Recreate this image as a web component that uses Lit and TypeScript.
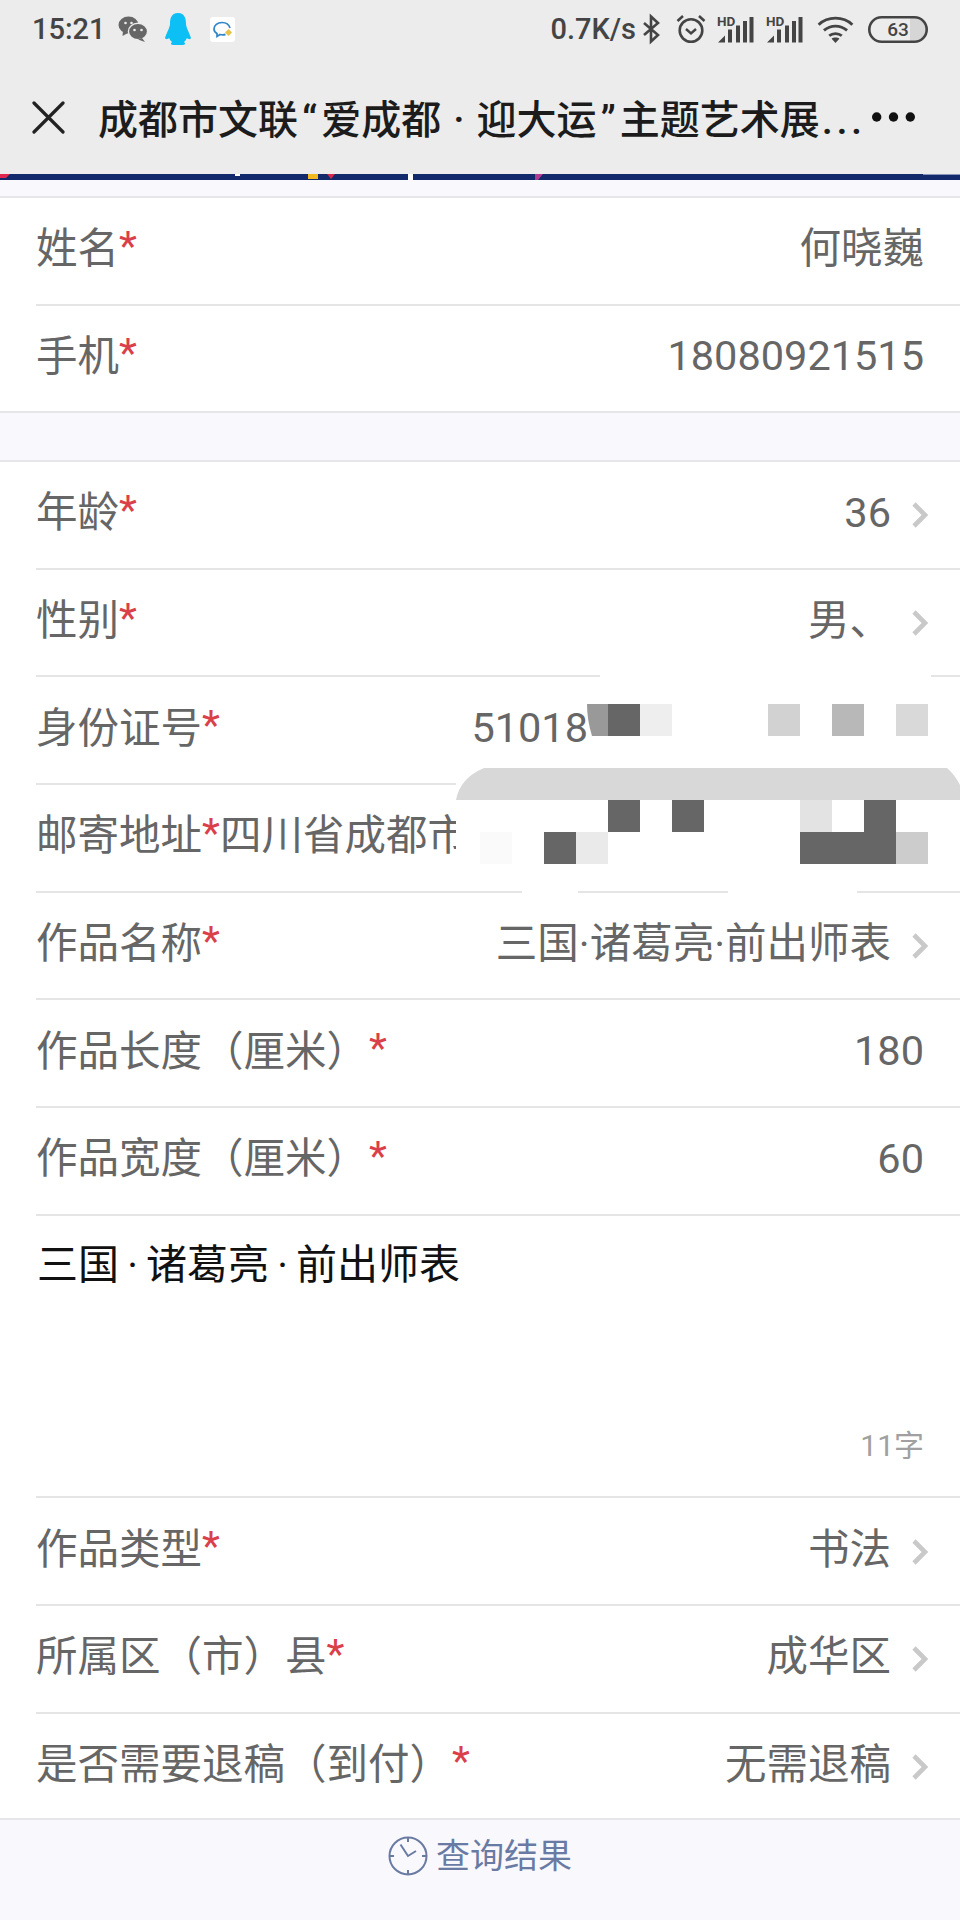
import { LitElement, html, css, svg } from "lit";
import { customElement } from "lit/decorators.js";

interface Field { label: string; value: string; chevron?: boolean; spaced?: boolean; kind?: string }

const FIRST: Field[] = [
  { label: "姓名", value: "何晓巍" },
  { label: "手机", value: "18080921515", kind: "num" },
];
const SECOND: Field[] = [
  { label: "年龄", value: "36", chevron: true, kind: "num" },
  { label: "性别", value: "男、", chevron: true },
  { label: "身份证号", value: "51018", kind: "id num" },
  { label: "邮寄地址", value: "四川省成都市", kind: "left" },
  { label: "作品名称", value: "三国·诸葛亮·前出师表", chevron: true },
  { label: "作品长度（厘米）", value: "180", spaced: true, kind: "num" },
  { label: "作品宽度（厘米）", value: "60", spaced: true, kind: "num" },
];
const THIRD: Field[] = [
  { label: "作品类型", value: "书法", chevron: true },
  { label: "所属区（市）县", value: "成华区", chevron: true },
  { label: "是否需要退稿（到付）", value: "无需退稿", chevron: true, spaced: true },
];

// Mosaic cells on a 32px grid: x, y, w, h, colour
const MOSAIC: [number, number, number, number, string][] = [
  [608, 704, 32, 32, "#666666"],
  [640, 704, 32, 32, "#eeeeee"],
  [768, 704, 32, 32, "#d2d2d2"],
  [832, 704, 32, 32, "#b8b8b8"],
  [896, 704, 32, 32, "#d9d9da"],
  [608, 800, 32, 32, "#666666"],
  [672, 800, 32, 32, "#666666"],
  [800, 800, 32, 32, "#e3e3e3"],
  [864, 800, 32, 32, "#666666"],
  [480, 832, 32, 32, "#fafafa"],
  [544, 832, 32, 32, "#666666"],
  [576, 832, 32, 32, "#eaeaea"],
  [800, 832, 96, 32, "#666666"],
  [896, 832, 32, 32, "#cccccc"],
];
// White patches of the redaction that hide text and rules below it
const PATCHES: [number, number, number, number][] = [
  [600, 670, 331, 34],
  [587, 704, 373, 64],
  [456, 768, 504, 118],
  [522, 880, 56, 16],
  [728, 880, 129, 16],
];

@customElement("app-root")
export class AppRoot extends LitElement {
  static styles = css`
    :host {
      display: block;
      position: relative;
      width: 960px;
      height: 1920px;
      overflow: hidden;
      background: #fff;
      font-family: Roboto, "Noto Sans CJK SC", sans-serif;
    }
    .top { background: #ececec; height: 174px; display: flex; flex-direction: column; }
    .status {
      height: 58px;
      padding: 0 32px;
      display: flex;
      align-items: center;
      color: #444;
    }
    .status .time { font-size: 29px; font-weight: 500; width: 70px; white-space: nowrap; }
    .status .speed { font-size: 29px; margin-left: auto; font-weight: 500; white-space: nowrap; }
    .status svg { display: block; flex: none; overflow: visible; }
    .ml6 { margin-left: 6px; }
    .ml11 { margin-left: 11px; }
    .ml12 { margin-left: 12px; }
    .ml14 { margin-left: 14px; }
    .ml15 { margin-left: 15px; }
    .ml16 { margin-left: 16px; }
    .ml18 { margin-left: 18px; }
    .title-row { flex: 1; display: flex; align-items: center; padding: 2px 0 0 32px; }
    .close { flex: none; display: block; }
    .title {
      font-size: 40px;
      font-weight: 500;
      color: #1c1c1c;
      margin-left: 33px;
      white-space: nowrap;
      flex: 1;
      min-width: 0;
      word-spacing: 2px;
    }
    .title .q { padding: 0 4px; }
    .title .dots { letter-spacing: 3.5px; margin-left: 2px; }
    .more { margin-right: 45px; flex: none; display: block; }
    .banner { height: 6px; display: block; width: 960px; }
    .spacer { background: #f9f8fd; height: 16px; border-bottom: 2px solid #e6e6e8; }
    .gap { background: #f9f8fd; height: 47.3px; border-top: 2px solid #e6e6e8; border-bottom: 2px solid #e6e6e8; }
    .row {
      margin-left: 36px;
      height: 107.7px;
      box-sizing: border-box;
      border-bottom: 2px solid #e5e5e5;
      padding: 0 36px 11px 0;
      display: flex;
      align-items: center;
      font-size: 41.5px;
      color: #666;
      white-space: nowrap;
    }
    .row.last { border-bottom: none; height: 105px; }
    .star { color: #d9404a; }
    .star.spaced { margin-left: 1px; }
    .value { margin-left: auto; color: #666; }
    .value.num { margin-top: 6px; }
    .value.left { margin-left: 0; }
    .value.id { margin-right: 336px; }
    .chev { margin-left: 20px; margin-right: -5px; margin-top: 12px; display: block; flex: none; }
    .note {
      margin-left: 36px;
      height: 282.5px;
      box-sizing: border-box;
      border-bottom: 2px solid #e5e5e5;
      padding: 21px 36px 0 1px;
      display: flex;
      flex-direction: column;
    }
    .note .text { font-size: 41px; color: #111; line-height: 56px; word-spacing: -2px; }
    .note .count { margin-top: auto; margin-bottom: 32px; align-self: flex-end; font-size: 30px; color: #a0a0a0; line-height: 36px; }
    .foot {
      position: absolute;
      left: 0;
      right: 0;
      bottom: 0;
      height: 102px;
      box-sizing: border-box;
      border-top: 2px solid #e6e6e8;
      background: #f9f8fd;
      display: flex;
      justify-content: center;
      padding-top: 16px;
      color: #6a7ba3;
      font-size: 34px;
      gap: 8px;
    }
    .foot span { line-height: 44px; margin-top: -2px; }
    .foot svg { display: block; }
    .cover { position: absolute; left: 0; top: 0; width: 960px; height: 1920px; display: block; pointer-events: none; }
  `;

  private chev() {
    return html`<svg class="chev" width="18" height="28" viewBox="0 0 18 28"><path d="M3 3 L14 14 L3 25" fill="none" stroke="#c9c9c9" stroke-width="4.6"/></svg>`;
  }

  private field(f: Field, last = false) {
    return html`<div class="row ${last ? "last" : ""}">
      <span>${f.label}</span><span class="star ${f.spaced ? "spaced" : ""}">*</span>
      <span class="value ${f.kind ?? ""}">${f.value}</span>
      ${f.chevron ? this.chev() : ""}
    </div>`;
  }

  private signal(cls: string) {
    return html`<svg class=${cls} width="37" height="27" viewBox="0 0 37 27">
      <text x="0" y="9.5" font-size="13.5" font-weight="700" font-family="Roboto" fill="#444">HD</text>
      <path fill="#444" d="M1 26.5 L8 19.5 V26.5 Z M11 13.5 H15 V26.5 H11 Z M19 9.5 H23 V26.5 H19 Z M26 5 H30 V26.5 H26 Z M32.5 1 H36.5 V26.5 H32.5 Z"/>
    </svg>`;
  }

  render() {
    return html`
      <div class="top">
        <div class="status">
          <span class="time">15:21</span>
          <svg class="ml16" width="30" height="26" viewBox="0 0 30 26">
            <ellipse cx="10.5" cy="9" rx="10" ry="8.5" fill="#666"/>
            <path d="M5 15 L4.5 20 L10 17 Z" fill="#666"/>
            <ellipse cx="20" cy="15.5" rx="9.6" ry="8.2" fill="#666" stroke="#ececec" stroke-width="1.4"/>
            <path d="M24 22 L27 26 L20 23.5 Z" fill="#666"/>
            <circle cx="7.5" cy="7" r="1.3" fill="#ececec"/><circle cx="13.5" cy="7" r="1.3" fill="#ececec"/>
            <circle cx="16.5" cy="14" r="1.3" fill="#ececec"/><circle cx="23.5" cy="14" r="1.3" fill="#ececec"/>
          </svg>
          <svg class="ml16" width="28" height="32" viewBox="0 0 28 32">
            <path fill="#0cc0f5" d="M14 0 C7 0 6 6 6 11 C6 14 3 19 1 25 C2 27 4 26 5 25 C6 27 7 28 8 29 C6 31 7 32 10 32 H18 C21 32 22 31 20 29 C21 28 22 27 23 25 C24 26 26 27 27 25 C25 19 22 14 22 11 C22 6 21 0 14 0 Z"/>
          </svg>
          <svg class="ml18" width="25" height="25" viewBox="0 0 25 25">
            <rect width="25" height="25" rx="3" fill="#fff"/>
            <path d="M12 5.5 C7.5 5.5 4 8.2 4 12 C4 14 5 15.5 7 16.5 L7 19.5 L10 17.5 C12 18 14 18 15.5 17.4" fill="none" stroke="#2e86c8" stroke-width="1.7"/>
            <path d="M12 5.5 C16 5.5 19 7.5 20 11" fill="none" stroke="#2e86c8" stroke-width="1.7"/>
            <path d="M18.5 12 L22 15.5 L18.5 19 L15 15.5 Z" fill="#e8c24a"/>
          </svg>
          <span class="speed">0.7K/s</span>
          <svg class="ml6" width="19" height="28" viewBox="0 0 19 28">
            <path d="M2 8 L16 20 L9 26.5 V1.5 L16 8 L2 20" fill="none" stroke="#444" stroke-width="2.6"/>
          </svg>
          <svg class="ml15" width="30" height="30" viewBox="0 0 30 30">
            <circle cx="15" cy="16.5" r="11.3" fill="none" stroke="#444" stroke-width="2.6"/>
            <path d="M10 15 L15 19.5 L20 15" fill="none" stroke="#444" stroke-width="2.4"/>
            <path d="M1.5 7 L7 2 M28.5 7 L23 2" stroke="#444" stroke-width="2.6"/>
          </svg>
          ${this.signal("ml11")}${this.signal("ml12")}
          <svg class="ml14" width="37" height="27" viewBox="0 0 38 28">
            <path d="M1.5 9 C11 0 27 0 36.5 9 M7 15 C14 9 24 9 31 15 M12.5 20.5 C16 17.5 22 17.5 25.5 20.5" fill="none" stroke="#444" stroke-width="3"/>
            <path d="M19 28 L15 23.5 C17 22 21 22 23 23.5 Z" fill="#444"/>
          </svg>
          <svg class="ml14" width="60" height="27" viewBox="0 0 60 27">
            <path d="M42 2 H46 C52 2 57.5 7 57.5 13.5 C57.5 20 52 25 46 25 H42 Z" fill="#d6d6d6"/>
            <rect x="1.3" y="1.3" width="57.4" height="24.4" rx="12.2" fill="none" stroke="#444" stroke-width="2.6"/>
            <text x="30" y="20" text-anchor="middle" font-size="19" font-weight="500" font-family="Roboto" fill="#444">63</text>
          </svg>
        </div>
        <div class="title-row">
          <svg class="close" width="33" height="33" viewBox="0 0 33 33">
            <path d="M2 2 L31 31 M31 2 L2 31" stroke="#222" stroke-width="3.2" stroke-linecap="round"/>
          </svg>
          <div class="title">成都市文联<span class="q">“</span>爱成都 · 迎大运<span class="q">”</span>主题艺术展<span class="dots">...</span></div>
          <svg class="more" width="43" height="10" viewBox="0 0 43 10">
            <circle cx="4.7" cy="5" r="4.7" fill="#111"/><circle cx="21.5" cy="5" r="4.7" fill="#111"/><circle cx="38.3" cy="5" r="4.7" fill="#111"/>
          </svg>
        </div>
      </div>
      <svg class="banner" viewBox="0 0 960 6">
        <rect width="960" height="6" fill="#12296b"/>
        <path d="M0 0 H10 L6 4 H0 Z" fill="#e0284f"/>
        <rect x="235" y="0" width="5" height="2" fill="#fff"/>
        <rect x="308" y="0" width="10" height="5" fill="#f2b920"/>
        <path d="M327 0 H335 L331 5 Z" fill="#d8264c"/>
        <rect x="408" y="0" width="5" height="6" fill="#fff"/>
        <path d="M535 0 H543 L538 6 H535 Z" fill="#b03a90"/>
        <rect x="923" y="0" width="37" height="1" fill="#8a94b8"/>
      </svg>
      <div class="spacer"></div>
      ${FIRST.map((f, i) => this.field(f, i === FIRST.length - 1))}
      <div class="gap"></div>
      ${SECOND.map((f) => this.field(f))}
      <div class="note">
        <div class="text">三国 · 诸葛亮 · 前出师表</div>
        <div class="count">11字</div>
      </div>
      ${THIRD.map((f, i) => this.field(f, i === THIRD.length - 1))}
      <div class="foot">
        <svg width="40" height="40" viewBox="0 0 40 40">
          <circle cx="20" cy="20" r="18.5" fill="none" stroke="#6a7ba3" stroke-width="2"/>
          <path d="M20 1.5 V6 M20 34 V38.5 M1.5 20 H6 M34 20 H38.5 M12.5 8.5 L20 20 L28 15" fill="none" stroke="#6a7ba3" stroke-width="2"/>
        </svg>
        <span>查询结果</span>
      </div>
      <svg class="cover" viewBox="0 0 960 1920">
        ${PATCHES.map(([x, y, w, h]) => svg`<rect x=${x} y=${y} width=${w} height=${h} fill="#fff"/>`)}
        <path d="M587 704 H608 V736 H592 Q587 720 587 704 Z" fill="#999"/>
        <path d="M456 800 Q460 778 484 768 H947 Q955 775 960 785 V800 Z" fill="#d8d8d8"/>
        ${MOSAIC.map(([x, y, w, h, c]) => svg`<rect x=${x} y=${y} width=${w} height=${h} fill=${c}/>`)}
      </svg>
    `;
  }
}
